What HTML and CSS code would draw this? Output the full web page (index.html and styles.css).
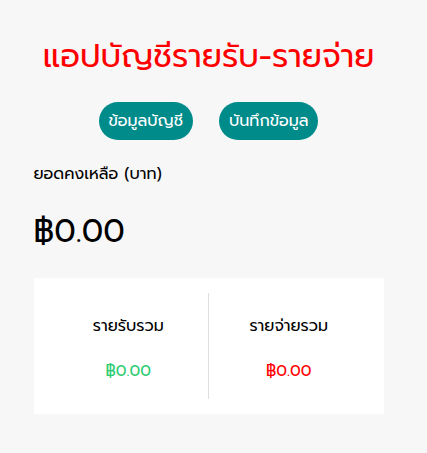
FILE: index.html
```html
<!DOCTYPE html>
<html lang="th">
<head>
<meta charset="utf-8">
<meta name="viewport" content="width=device-width, initial-scale=1">
<title>แอปบัญชีรายรับ-รายจ่าย</title>
<link rel="stylesheet" href="styles.css">
</head>
<body>
<main class="container">
  <h1 class="title">แอปบัญชีรายรับ-รายจ่าย</h1>
  <nav class="menu">
    <a class="menu-link" href="#report">ข้อมูลบัญชี</a>
    <a class="menu-link" href="#insert">บันทึกข้อมูล</a>
  </nav>
  <section class="balance">
    <h2 class="label">ยอดคงเหลือ (บาท)</h2>
    <p class="amount">฿0.00</p>
  </section>
  <section class="report">
    <div class="report-item">
      <h3 class="label">รายรับรวม</h3>
      <p class="report-value income">฿0.00</p>
    </div>
    <div class="report-item">
      <h3 class="label">รายจ่ายรวม</h3>
      <p class="report-value expense">฿0.00</p>
    </div>
  </section>
</main>
</body>
</html>
```
FILE: styles.css
```css
* { box-sizing: border-box; margin: 0; }
body {
  padding-right: 10px;
  background: #f7f7f7;
  color: #000;
  font-family: Prompt, "Noto Sans Thai", "Noto Sans", sans-serif;
  font-size: 16px;
  line-height: 24px;
}
.container { max-width: 350px; margin: 0 auto; padding: 33px 0; }
.title { color: #f00; font-size: 32px; line-height: 48px; font-weight: 400; text-align: center; }
.menu { display: flex; justify-content: center; gap: 26px; padding-top: 21px; }
.menu-link {
  padding: 7px 10px;
  border-radius: 20px;
  background: #008b8b;
  color: #fff;
  text-decoration: none;
}
.balance { padding-top: 22px; }
.label { font-size: 16px; font-weight: 400; }
.amount { padding-top: 22px; font-size: 32px; line-height: 48px; }
.report { display: flex; margin-top: 22px; padding: 15px; background: #fff; }
.report-item { flex: 1; padding: 21px 0 16px; text-align: center; }
.report-item + .report-item { border-left: 1px solid #dedede; }
.report-value { padding-top: 21px; }
.income { color: #2ecc71; }
.expense { color: #f00; }
```
